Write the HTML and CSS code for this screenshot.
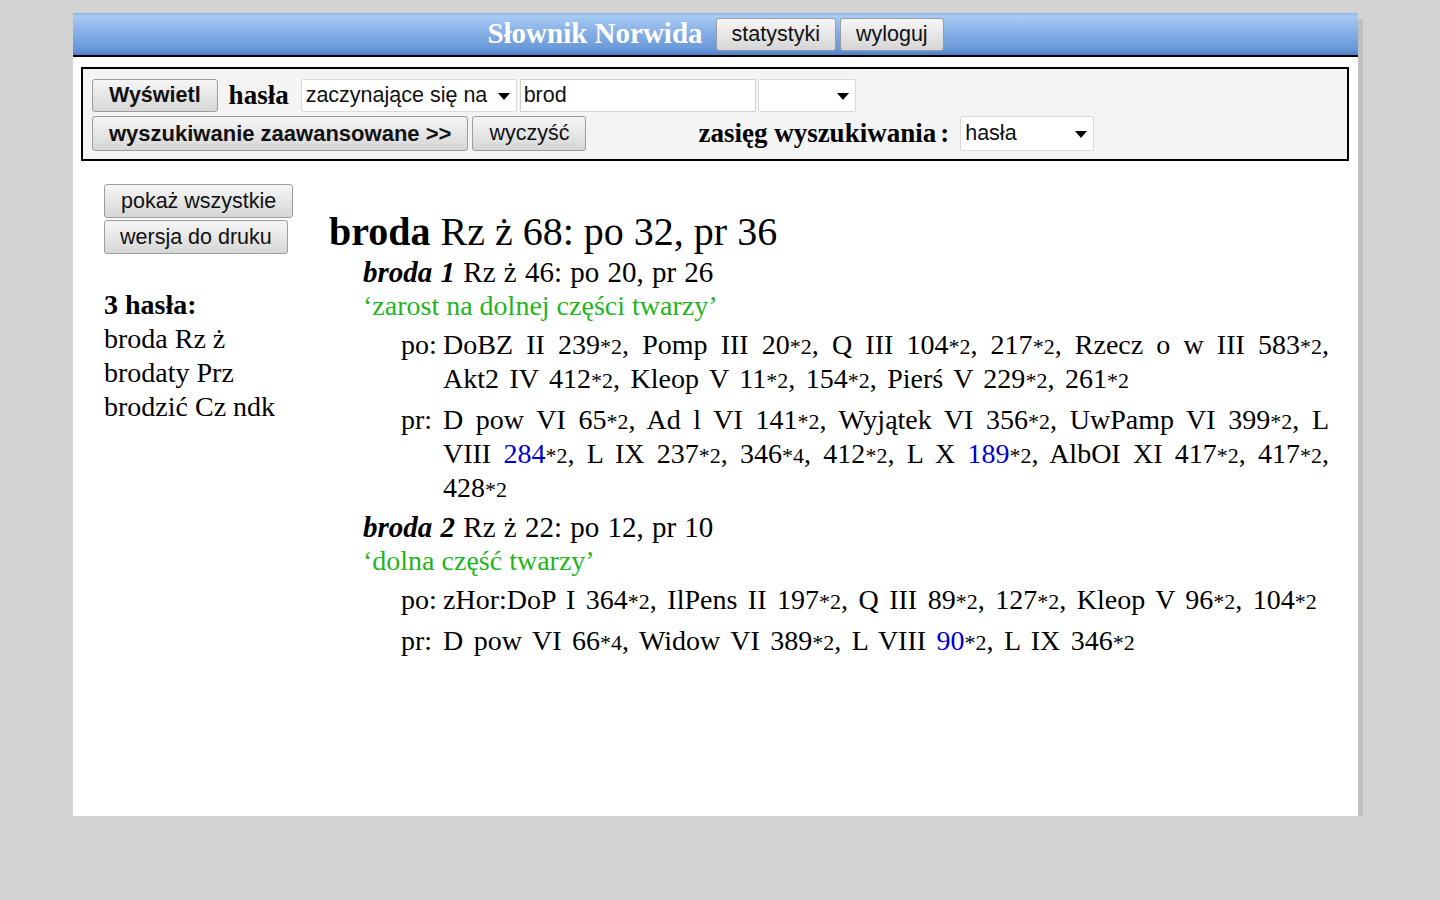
FILE: index.html
```html
<!DOCTYPE html>
<html lang="pl">
<head>
    <meta charset="UTF-8">
    <title>Słownik Norwida</title>
    <link rel="stylesheet" href="styles.css">
</head>
<body>
    <div class="page">
        <div class="topbar">
            <span class="title">Słownik Norwida</span>
            <button class="btn">statystyki</button>
            <button class="btn">wyloguj</button>
        </div>

        <div class="search">
            <div class="search-row">
                <button class="btn bold">Wyświetl</button>
                <span class="lbl lbl-hasla">hasła</span>
                <span class="sel sel-mode">zaczynające się na</span>
                <input type="text" class="query" value="brod">
                <span class="sel sel-extra"></span>
            </div>
            <div class="search-row">
                <button class="btn bold btn-adv">wyszukiwanie zaawansowane &gt;&gt;</button>
                <button class="btn btn-clear">wyczyść</button>
                <span class="lbl lbl-scope">zasięg wyszukiwania<span class="colon">:</span></span>
                <span class="sel sel-scope">hasła</span>
            </div>
        </div>

        <div class="content">
            <div class="side">
                <button class="btn side-btn">pokaż wszystkie</button>
                <button class="btn side-btn">wersja do druku</button>
                <div class="count">3 hasła:</div>
                <div class="side-item">broda Rz ż</div>
                <div class="side-item">brodaty Prz</div>
                <div class="side-item">brodzić Cz ndk</div>
            </div>

            <div class="entry">
                <h1 class="head"><b>broda</b> Rz ż 68: po 32, pr 36</h1>

                <div class="sense">
                    <div class="sense-head"><b><i>broda 1</i></b> Rz ż 46: po 20, pr 26</div>
                    <div class="def">‘zarost na dolnej części twarzy’</div>
                    <p class="occ"><span class="lab">po:</span>DoBZ II 239<span class="n">*2</span>, Pomp III 20<span class="n">*2</span>, Q III 104<span class="n">*2</span>, 217<span class="n">*2</span>, Rzecz o w III 583<span class="n">*2</span>, Akt2 IV 412<span class="n">*2</span>, Kleop V 11<span class="n">*2</span>, 154<span class="n">*2</span>, Pierś V 229<span class="n">*2</span>, 261<span class="n">*2</span></p>
                    <p class="occ"><span class="lab">pr:</span>D pow VI 65<span class="n">*2</span>, Ad l VI 141<span class="n">*2</span>, Wyjątek VI 356<span class="n">*2</span>, UwPamp VI 399<span class="n">*2</span>, L VIII <a href="#">284</a><span class="n">*2</span>, L IX 237<span class="n">*2</span>, 346<span class="n">*4</span>, 412<span class="n">*2</span>, L X <a href="#">189</a><span class="n">*2</span>, AlbOI XI 417<span class="n">*2</span>, 417<span class="n">*2</span>, 428<span class="n">*2</span></p>
                </div>

                <div class="sense">
                    <div class="sense-head"><b><i>broda 2</i></b> Rz ż 22: po 12, pr 10</div>
                    <div class="def">‘dolna część twarzy’</div>
                    <p class="occ"><span class="lab">po:</span>zHor:DoP I 364<span class="n">*2</span>, IlPens II 197<span class="n">*2</span>, Q III 89<span class="n">*2</span>, 127<span class="n">*2</span>, Kleop V 96<span class="n">*2</span>, 104<span class="n">*2</span></p>
                    <p class="occ"><span class="lab">pr:</span>D pow VI 66<span class="n">*4</span>, Widow VI 389<span class="n">*2</span>, L VIII <a href="#">90</a><span class="n">*2</span>, L IX 346<span class="n">*2</span></p>
                </div>
            </div>
        </div>
    </div>
</body>
</html>
```

FILE: styles.css
```css
body {
    margin: 0;
    padding-top: 13px;
    background: #d3d3d3;
    font-family: "Liberation Serif", "Times New Roman", serif;
    color: #000;
}

.page {
    width: 1285px;
    min-height: 803px;
    margin-left: 73px;
    background: #fff;
    box-shadow: 5px 6px 0 #c0c0c0;
    box-sizing: border-box;
}

/* top bar */

.topbar {
    height: 42px;
    display: flex;
    align-items: center;
    justify-content: center;
    gap: 4px;
    background: linear-gradient(#8db3e7 0, #a7cbf4 3px, #86b0e7 45%, #6a99d8 85%, #4f80c9 100%);
    border-bottom: 2px solid #000;
}

.title {
    color: #fff;
    font-weight: bold;
    font-size: 29px;
    margin-right: 9px;
    margin-top: -2px;
}

.btn {
    font-family: "Liberation Sans", Arial, sans-serif;
    font-size: 21.5px;
    height: 33px;
    padding: 0 15px;
    color: #111;
    background: linear-gradient(#f6f6f6, #e6e6e6 50%, #d6d6d6);
    border: 1px solid #9c9c9c;
    border-radius: 3px;
    line-height: 31px;
}

.btn.bold {
    font-weight: bold;
    padding: 0 16px;
}

/* search panel */

.search {
    margin: 10px 9px 0 8px;
    padding: 10px 9px 8px;
    background: #f4f4f4;
    border: 2px solid #000;
}

.search-row {
    display: flex;
    align-items: center;
}

.search-row + .search-row {
    margin-top: 4px;
}

.lbl {
    font-weight: bold;
    font-size: 27px;
}

.lbl-hasla {
    margin: 0 12px 0 11px;
}

.lbl-scope {
    margin: 0 11px 0 112px;
}

.colon {
    margin-left: 4px;
}

.btn.btn-adv {
    font-size: 22px;
    height: 35px;
}

.btn-clear {
    margin-left: 4px;
    padding: 0 16px;
    height: 35px;
}

.sel {
    position: relative;
    display: inline-block;
    box-sizing: border-box;
    height: 33px;
    line-height: 31px;
    padding-left: 4px;
    background: #fff;
    border: 1px solid #dadada;
    border-radius: 2px;
    font-family: "Liberation Sans", Arial, sans-serif;
    font-size: 21.5px;
    color: #111;
}

.sel::after {
    content: "";
    position: absolute;
    right: 6px;
    top: 13px;
    border-left: 6px solid transparent;
    border-right: 6px solid transparent;
    border-top: 7px solid #000;
}

.sel-mode {
    width: 216px;
}

.sel-extra {
    width: 98px;
    margin-left: 2px;
}

.sel-scope {
    width: 134px;
    height: 35px;
    line-height: 33px;
}

.sel-scope::after {
    top: 14px;
}

.query {
    box-sizing: border-box;
    width: 236px;
    height: 33px;
    margin: 0 0 0 3px;
    padding: 0 3px;
    border: 1px solid #cfcfcf;
    font-family: "Liberation Sans", Arial, sans-serif;
    font-size: 21.5px;
    color: #111;
}

/* content */

.content {
    display: flex;
    padding: 23px 29px 40px 31px;
}

.side {
    width: 225px;
    flex: none;
}

.side-btn {
    display: block;
    margin-bottom: 2px;
    padding: 0 16px;
    height: 34px;
}

.side-btn + .side-btn {
    padding: 0 15px;
}

.count {
    margin-top: 34px;
    font-weight: bold;
    font-size: 28px;
    line-height: 34px;
}

.side-item {
    font-size: 28px;
    line-height: 34px;
}

.entry {
    flex: 1;
    font-size: 28px;
    line-height: 34px;
}

.head {
    margin: 25px 0 0;
    font-size: 40px;
    font-weight: normal;
    line-height: 46px;
}

.sense {
    margin-left: 34px;
}

.sense + .sense {
    margin-top: 5px;
}

.sense-head {
    font-size: 29px;
    word-spacing: 1px;
}

.def {
    color: #1fb51f;
}

.occ {
    margin: 5px 0 0 38px;
    padding-left: 42px;
    text-indent: -42px;
    text-align: justify;
    word-spacing: 3.5px;
}

.occ + .occ {
    margin-top: 7px;
}

.lab {
    display: inline-block;
    width: 42px;
    text-indent: 0;
    word-spacing: 0;
}

.n {
    font-size: 22px;
    line-height: 1;
}

a {
    color: #0000cd;
    text-decoration: none;
}
```
